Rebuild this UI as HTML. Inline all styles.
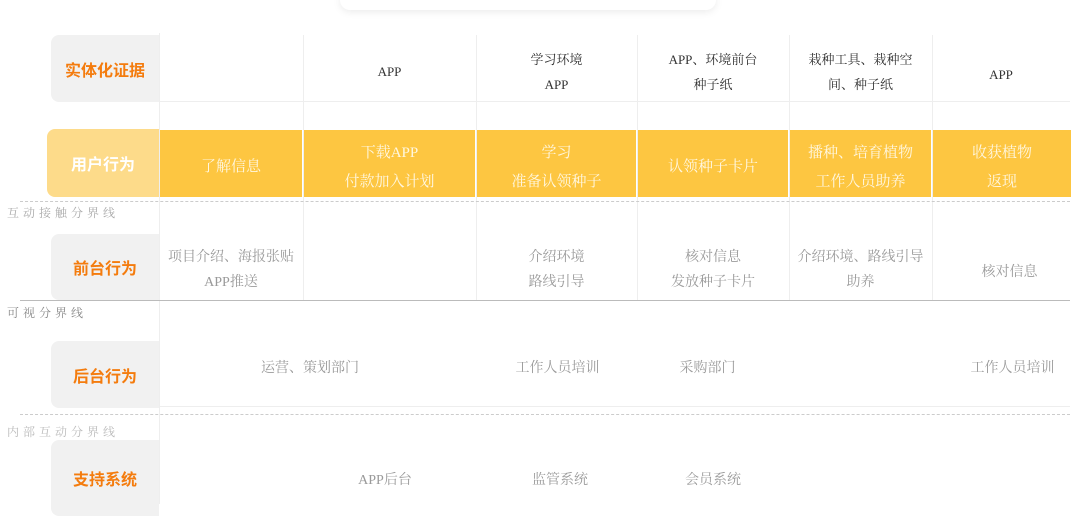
<!DOCTYPE html>
<html><head><meta charset="utf-8"><style>
body{margin:0;width:1080px;height:504px;background:#fff;position:relative;overflow:hidden;font-family:"Liberation Serif","Noto Serif CJK SC",serif}
.a{position:absolute}
.lab{position:absolute;background:#f1f1f1;border-radius:8px 0 0 8px;color:#f47c0e;font-family:"Liberation Sans","Noto Sans CJK SC",sans-serif;font-weight:bold;font-size:16px;display:flex;align-items:center;justify-content:center}
.c{position:absolute;display:flex;align-items:center;justify-content:center;text-align:center;line-height:25px;font-size:13px;padding-top:6px;box-sizing:border-box}
.v{position:absolute;width:1px;background:#eee}
.y{background:#fdc641;color:#fff7e0;font-size:15px;line-height:29px;padding-top:8px}
.g{color:#9a9a9a;font-size:14px}
.d{color:#333}
.sl{position:absolute;color:#aaa;font-size:12px;letter-spacing:4px}
</style></head><body>
<div class="a" style="left:340px;top:-10px;width:376px;height:20px;border-radius:10px;box-shadow:0 2px 8px rgba(0,0,0,.08);background:#fff"></div>

<div class="v" style="left:159px;top:33px;height:471px"></div>
<div class="v" style="left:303px;top:35px;height:265px"></div>
<div class="v" style="left:476px;top:35px;height:265px"></div>
<div class="v" style="left:637px;top:35px;height:265px"></div>
<div class="v" style="left:789px;top:35px;height:265px"></div>
<div class="v" style="left:932px;top:35px;height:265px"></div>
<div class="a" style="left:159px;top:101px;width:911px;height:1px;background:#eee"></div>
<div class="a" style="left:159px;top:406px;width:911px;height:1px;background:#eee"></div>

<div class="lab" style="left:51px;top:35px;width:108px;height:67px">实体化证据</div>
<div class="c d" style="left:303px;top:35px;width:173px;height:67px">APP</div>
<div class="c d" style="left:476px;top:35px;width:161px;height:67px">学习环境<br>APP</div>
<div class="c d" style="left:637px;top:35px;width:152px;height:67px">APP、环境前台<br>种子纸</div>
<div class="c d" style="left:789px;top:35px;width:143px;height:67px">栽种工具、栽种空<br>间、种子纸</div>
<div class="c d" style="left:932px;top:35px;width:138px;height:72px">APP</div>

<div class="lab" style="left:47px;top:129px;width:112px;height:68px;background:#fddb8a;color:#fff">用户行为</div>
<div class="c y" style="left:160px;top:130px;width:142px;height:67px">了解信息</div>
<div class="c y" style="left:304px;top:130px;width:171px;height:67px">下载APP<br>付款加入计划</div>
<div class="c y" style="left:477px;top:130px;width:159px;height:67px">学习<br>准备认领种子</div>
<div class="c y" style="left:638px;top:130px;width:150px;height:67px">认领种子卡片</div>
<div class="c y" style="left:790px;top:130px;width:141px;height:67px">播种、培育植物<br>工作人员助养</div>
<div class="c y" style="left:933px;top:130px;width:138px;height:67px">收获植物<br>返现</div>

<div class="a" style="left:20px;top:201px;width:1050px;border-top:1px dashed #ccc"></div>
<div class="sl" style="left:7px;top:204px">互动接触分界线</div>

<div class="lab" style="left:51px;top:234px;width:108px;height:66px">前台行为</div>
<div class="c g" style="left:159px;top:234px;width:144px;height:66px">项目介绍、海报张贴<br>APP推送</div>
<div class="c g" style="left:476px;top:234px;width:161px;height:66px">介绍环境<br>路线引导</div>
<div class="c g" style="left:637px;top:234px;width:152px;height:66px">核对信息<br>发放种子卡片</div>
<div class="c g" style="left:789px;top:234px;width:143px;height:66px">介绍环境、路线引导<br>助养</div>
<div class="c g" style="left:932px;top:234px;width:155px;height:70px">核对信息</div>

<div class="a" style="left:20px;top:300px;width:1050px;height:1px;background:#bbb"></div>
<div class="sl" style="left:7px;top:304px;color:#888">可视分界线</div>

<div class="lab" style="left:51px;top:341px;width:108px;height:67px">后台行为</div>
<div class="c g" style="left:230px;top:350px;width:160px;height:30px">运营、策划部门</div>
<div class="c g" style="left:490px;top:350px;width:135px;height:30px">工作人员培训</div>
<div class="c g" style="left:660px;top:350px;width:95px;height:30px">采购部门</div>
<div class="c g" style="left:945px;top:350px;width:135px;height:30px">工作人员培训</div>

<div class="a" style="left:20px;top:414px;width:1050px;border-top:1px dashed #ccc"></div>
<div class="sl" style="left:7px;top:423px;color:#bbb">内部互动分界线</div>

<div class="lab" style="left:51px;top:440px;width:108px;height:76px">支持系统</div>
<div class="c g" style="left:335px;top:462px;width:100px;height:30px">APP后台</div>
<div class="c g" style="left:510px;top:462px;width:100px;height:30px">监管系统</div>
<div class="c g" style="left:663px;top:462px;width:100px;height:30px">会员系统</div>
</body></html>
